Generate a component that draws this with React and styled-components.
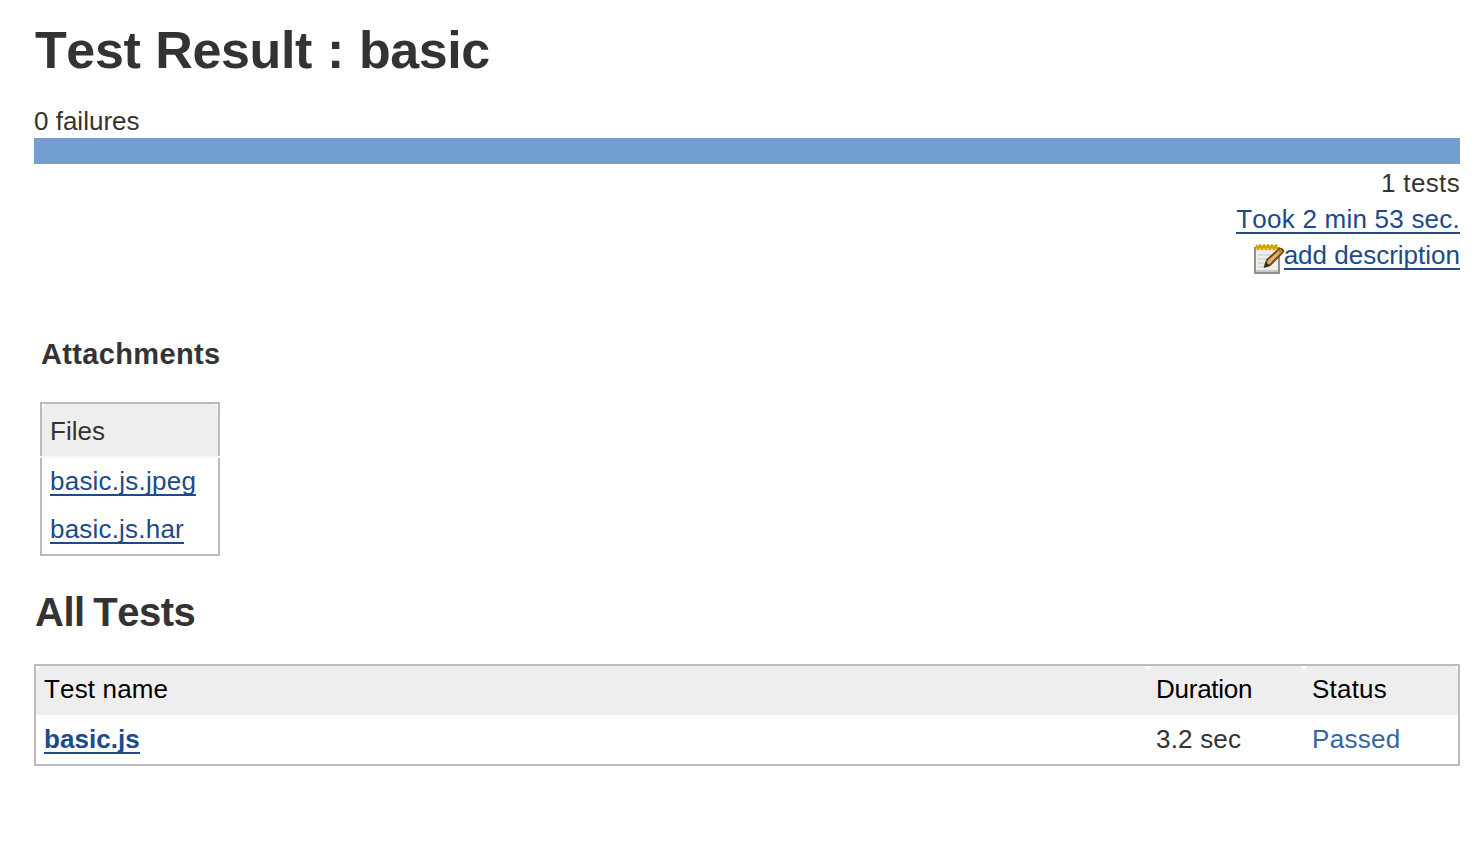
import React from 'react';
import styled, { createGlobalStyle } from 'styled-components';

const Global = createGlobalStyle`
  body {
    margin: 0;
    background: #fff;
    color: #333;
    font: 26px/36px "Liberation Sans", Arial, sans-serif;
    font-kerning: none;
  }
`;
const Page = styled.main`
  padding: 20px 22px 0 34px;
`;
const Title = styled.h1`
  margin: 0;
  padding-left: 1px;
  font-size: 52px;
  line-height: 60px;
  letter-spacing: -0.4px;
  word-spacing: 1px;
`;
const Summary = styled.div`
  padding-top: 23px;
  height: 35px;
  line-height: 37px;
`;
const Bar = styled.div`
  height: 26px;
  background: #729fcf;
`;
const Details = styled.div`
  display: flex;
  flex-direction: column;
  align-items: flex-end;
  padding-top: 2px;
`;
const Line = styled.div`
  display: flex;
  height: 36px;
  line-height: 34px;
  letter-spacing: ${(p) => p.$track || 0}px;
`;
const Link = styled.a`
  display: inline-block;
  height: 30px;
  line-height: 34px;
  border-bottom: 2px solid #204a87;
  color: #204a87;
  font-weight: ${(p) => (p.$bold ? 700 : 400)};
  letter-spacing: ${(p) => p.$track || 0}px;
  white-space: nowrap;
`;
const NoteIcon = styled.svg`
  width: 32px;
  height: 32px;
  margin: 6px -2px 0 0;
`;
const Attachments = styled.section`
  width: 180px;
  margin: 62px 0 0 6px;
`;
const SmallHeading = styled.h3`
  margin: 0 0 30px;
  padding-left: 1px;
  font-size: 29px;
  line-height: 36px;
  letter-spacing: 0.35px;
`;
const FileTable = styled.div`
  border: 2px solid #bbb;
  height: 150px;
`;
const FileHead = styled.div`
  height: 52px;
  padding-left: 8px;
  line-height: 54px;
  background: #eee;
  border-radius: 6px 6px 0 0;
`;
const Divider = styled.div`
  height: 2px;
  margin: 0 -2px;
  background: #f6f6f6;
`;
const FileRow = styled.div`
  display: flex;
  align-items: flex-start;
  height: 48px;
  padding: 6px 0 0 8px;
  box-sizing: border-box;
`;
const Heading = styled.h2`
  margin: 34px 0 30px;
  padding-left: 1px;
  font-size: 40px;
  line-height: 44px;
  letter-spacing: -0.5px;
  word-spacing: -2px;
`;
const TestTable = styled.div`
  border: 2px solid #bbb;
`;
const Row = styled.div`
  display: grid;
  grid-template-columns: 1112px 156px 1fr;
  height: 49px;
  line-height: ${(p) => (p.$head ? 46 : 48)}px;
  color: ${(p) => (p.$head ? '#000' : '#333')};
`;
const Cell = styled.div`
  padding-left: 8px;
  background: ${(p) => (p.$head ? '#eee' : 'transparent')};
  border-radius: ${(p) => (p.$head ? '6px 6px 0 0' : 0)};
  color: ${(p) => (p.$passed ? '#3465a4' : 'inherit')};
  letter-spacing: ${(p) => p.$track || 0}px;
`;

function Notepad() {
  return (
    <NoteIcon viewBox="0 0 32 32" aria-hidden="true">
      <path d="M1 4h24v25H1z" fill="#eeeeec" stroke="#8f918c" strokeWidth="2" />
      <path d="M2 27h22" stroke="#c5c7c2" strokeWidth="2" />
      <path d="M4 11h16M4 15h14M4 19h8M4 23h6" stroke="#d0d2cd" strokeWidth="1.6" />
      <path d="M2 1h22v5H2z" fill="#f0d84a" />
      <path d="m2 1 2 4 2-4 2 4 2-4 2 4 2-4 2 4 2-4 2 4 2-4 1 4" fill="none" stroke="#c9a500" strokeWidth="1.8" />
      <path d="m11 22 2-6L25 5c2-1 5 1 4 3L16 21z" fill="#dcb27a" stroke="#7c4a08" strokeWidth="2" />
      <path d="m24 6 3-1 1 3-2 2z" fill="#b98a3c" />
      <path d="m10 24 2-6 4 4z" fill="#2e2a20" />
    </NoteIcon>
  );
}

export default function App() {
  return (
    <Page>
      <Global />
      <Title>Test Result : basic</Title>
      <Summary>0 failures</Summary>
      <Bar />
      <Details>
        <Line $track={0.35}>1 tests</Line>
        <Line><Link $track={0.23}>Took 2 min 53 sec.</Link></Line>
        <Line><Notepad /><Link>add description</Link></Line>
      </Details>
      <Attachments>
        <SmallHeading>Attachments</SmallHeading>
        <FileTable>
          <FileHead>Files</FileHead>
          <Divider />
          <FileRow><Link $track={0.23}>basic.js.jpeg</Link></FileRow>
          <FileRow><Link $track={0.2}>basic.js.har</Link></FileRow>
        </FileTable>
      </Attachments>
      <Heading>All Tests</Heading>
      <TestTable>
        <Row $head>
          <Cell $head $track={0.15}>Test name</Cell>
          <Cell $head $track={-0.25}>Duration</Cell>
          <Cell $head $track={0.2}>Status</Cell>
        </Row>
        <Row>
          <Cell><Link $bold $track={0.05}>basic.js</Link></Cell>
          <Cell $track={0.2}>3.2 sec</Cell>
          <Cell $passed $track={0.3}>Passed</Cell>
        </Row>
      </TestTable>
    </Page>
  );
}
